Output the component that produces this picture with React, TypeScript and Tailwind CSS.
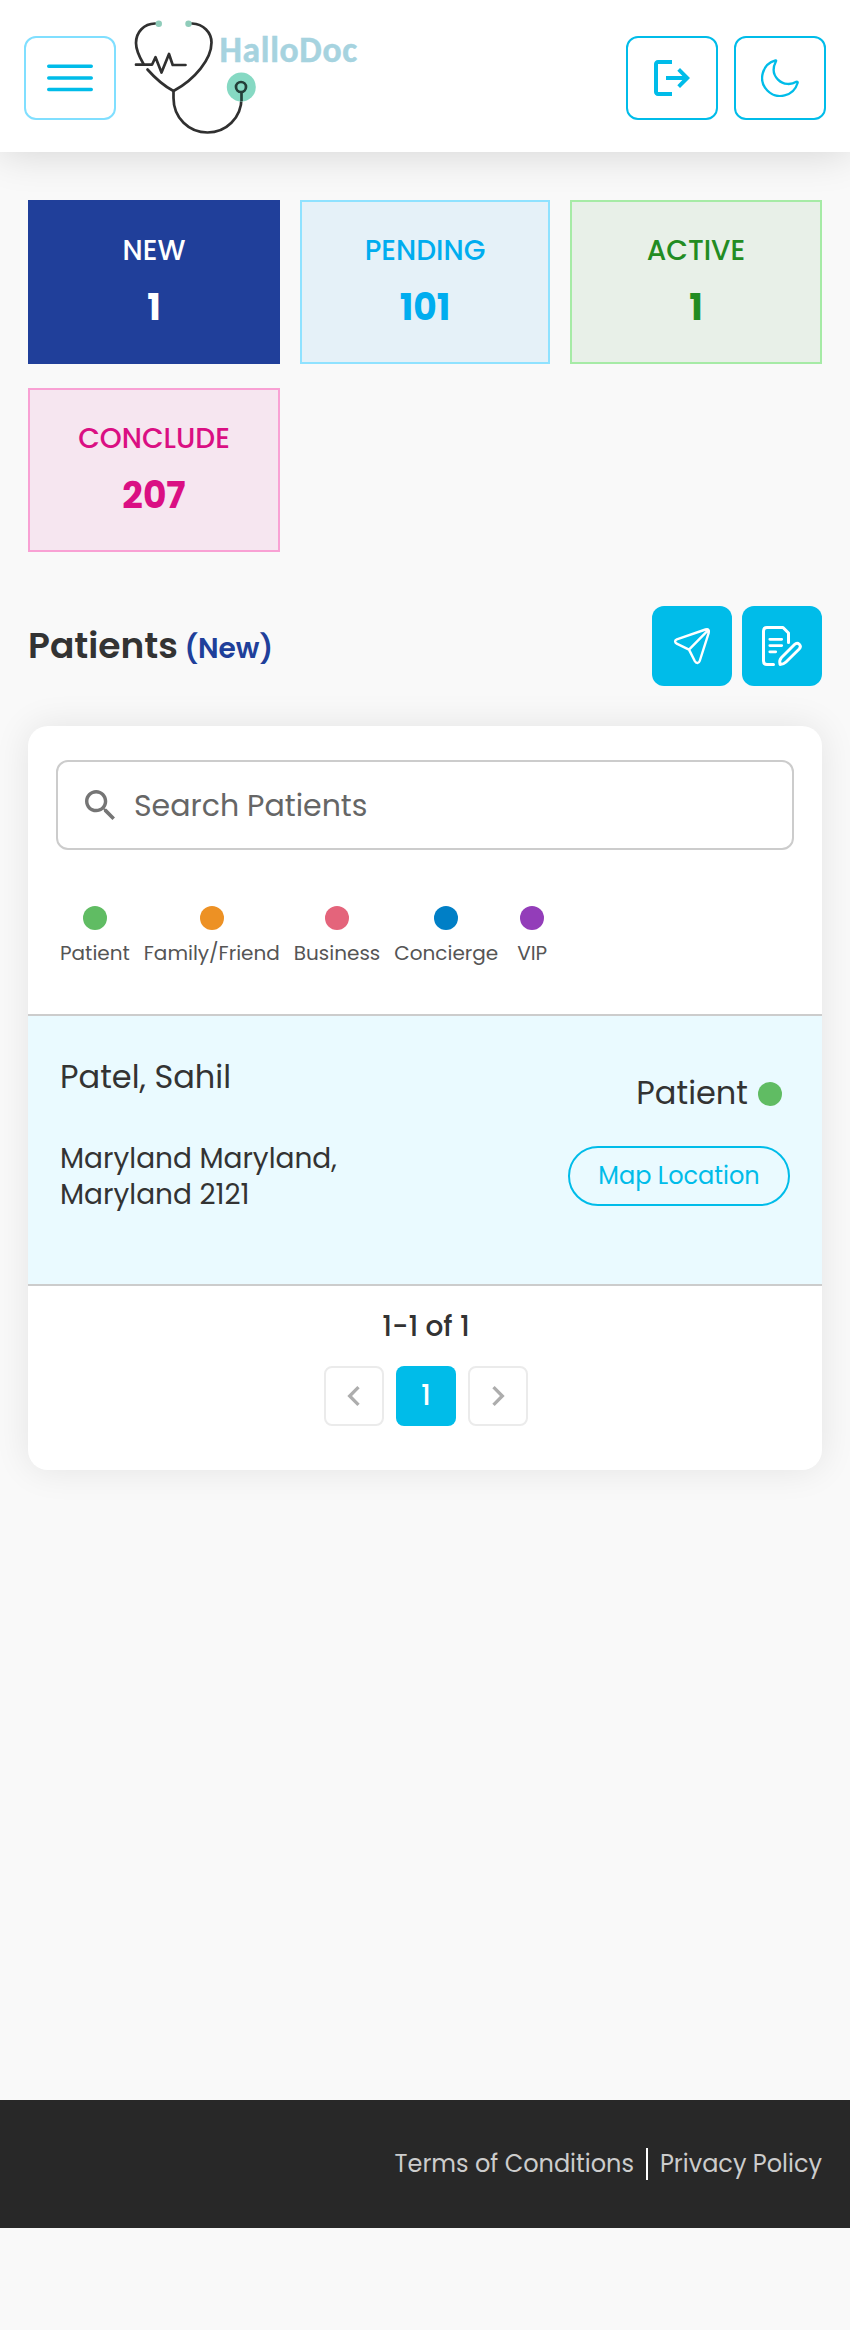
import React from "react";

type Stat = { label: string; count: number; box: string };

const stats: Stat[] = [
  { label: "NEW", count: 1, box: "border-[#203f9a] bg-[#203f9a] text-white" },
  { label: "PENDING", count: 101, box: "border-[#8fe2ff] bg-[#e5f1f8] text-[#00adef]" },
  { label: "ACTIVE", count: 1, box: "border-[#a6eba6] bg-[#e8f0e8] text-[#228c22]" },
  { label: "CONCLUDE", count: 207, box: "border-[#f9a1d4] bg-[#f6e6f0] text-[#da0f83]" },
];

const legend = [
  { label: "Patient", dot: "bg-[#60bc63]" },
  { label: "Family/Friend", dot: "bg-[#ed9124]" },
  { label: "Business", dot: "bg-[#e4647b]" },
  { label: "Concierge", dot: "bg-[#007fc6]" },
  { label: "VIP", dot: "bg-[#933db9]" },
];

function Logo() {
  return (
    <svg width="230" height="120" viewBox="130 16 230 120" fill="none">
      <g stroke="#303030" strokeWidth="2.7" strokeLinecap="round" strokeLinejoin="round">
        <path d="M155 23.500C144 23.700 136 32 136 43C136 51 140 58 143.500 64" />
        <path d="M192 23.500C203.500 24 211.500 32.500 211.500 42.500C211.500 59 195 79.500 173.500 91" />
        <path d="M147.500 69.500C155 78 164 86 173.500 91V98C173.500 118 189 132.500 207.500 132.500C226 132.500 241.500 118 241.500 98" />
        <path d="M136 64.700H152L155.500 57.200L161.500 72.500L169 54L172.700 65H185.500" />
      </g>
      <circle cx="158.800" cy="23.800" r="3.200" fill="#8fccba" />
      <circle cx="188.500" cy="23.800" r="3.200" fill="#8fccba" />
      <circle cx="241.300" cy="87" r="14.500" fill="#86d9c3" />
      <circle cx="241" cy="87" r="5" stroke="#243f39" strokeWidth="2.700" />
      <path d="M241.500 92V101" stroke="#243f39" strokeWidth="2.700" />
      <text x="219.500" y="61.700" fill="#a6d3df" stroke="#a6d3df" strokeWidth="0.5" fontSize="35.500" fontWeight="700" textLength="137.500" lengthAdjust="spacing" fontFamily="Carlito, Lato, sans-serif">
        HalloDoc
      </text>
    </svg>
  );
}

function MenuIcon() {
  return (
    <svg width="46" height="28" viewBox="0 0 46 28" stroke="#00bce9" strokeWidth="3.4" strokeLinecap="round">
      <path d="M1.700 2.300H44.300M1.700 14H44.300M1.700 25.500H44.300" />
    </svg>
  );
}

function LogoutIcon() {
  return (
    <svg width="48" height="48" viewBox="0 0 24 24" fill="#00bce9">
      <path d="M5 5h7V3H5c-1.100 0-2 .9-2 2v14c0 1.100.9 2 2 2h7v-2H5z" />
      <path d="M16 7l-1.350 1.400L17.200 11H9v2h8.200l-2.550 2.600L16 17l5-5z" />
    </svg>
  );
}

function MoonIcon() {
  return (
    <svg width="38" height="38" viewBox="0 0 38 38" fill="none" stroke="#00bce9" strokeWidth="2.3" strokeLinejoin="round">
      <path d="M14.500 1.400A18.100 18.100 0 1 0 36.600 24C37 22.900 36.300 22.400 35.300 22.800C30.500 25.900 22.500 26.200 17 20.600C12 15.500 11.700 8.600 14.900 2.500C15.300 1.600 15.300 1.300 14.500 1.400Z" />
    </svg>
  );
}

function SendIcon() {
  return (
    <svg width="80" height="80" viewBox="0 0 80 80" fill="none" stroke="#fff" strokeWidth="2.4" strokeLinejoin="round" strokeLinecap="round">
      <path d="M24.800 33.400L53.500 23.500C56.200 22.600 57.500 24 56.700 26.800L47.700 55C46.900 57.600 44.200 57.700 42.900 55.300L37 43.600L24.700 37.600C22.500 36.500 22.600 34.200 24.800 33.400ZM37 43.600L56.200 24.200" />
    </svg>
  );
}

function NoteIcon() {
  return (
    <svg width="80" height="80" viewBox="0 0 80 80" fill="none" stroke="#fff" strokeWidth="3" strokeLinecap="round" strokeLinejoin="round">
      <path d="M46.500 36.500V27L41 21.500H25C22.800 21.500 21.500 22.800 21.500 25V55C21.500 57.200 22.800 58.500 25 58.500H31.500" />
      <path d="M27.800 33.300H39.700M27.800 39.600H39.700M27.800 45.800H33.700" strokeWidth="2.8" />
      <path d="M39.500 51.500L52.500 38.500C54 37 56 37 57.300 38.200C58.600 39.500 58.600 41.500 57.200 43L44 56C42.500 57.500 40.500 58.300 38 58.500C37.200 55.500 37.800 53.300 39.500 51.500Z" strokeWidth="2.9" />
    </svg>
  );
}

function SearchIcon() {
  return (
    <svg width="30" height="30" viewBox="3 3 17.500 17.500" fill="#757575">
      <path d="M15.500 14h-.79l-.28-.27C15.410 12.590 16 11.110 16 9.500 16 5.910 13.090 3 9.500 3S3 5.910 3 9.500 5.910 16 9.500 16c1.610 0 3.090-.59 4.230-1.570l.27.28v.79l5 4.990L20.490 19zm-6 0C7.010 14 5 11.990 5 9.500S7.010 5 9.500 5 14 7.010 14 9.500 11.990 14 9.500 14" />
    </svg>
  );
}

function Chevron({ d }: { d: string }) {
  return (
    <svg width="40" height="40" viewBox="0 0 24 24" fill="#adadad">
      <path d={d} />
    </svg>
  );
}

export default function App() {
  return (
    <div className="flex h-[2330px] w-full flex-col bg-[#f9f9f9] font-['Poppins','Inter',sans-serif] text-[#333]">
      <header className="flex h-[152px] shrink-0 items-center bg-white px-6 pt-1 shadow-[0_0_40px_rgba(0,0,0,0.16)]">
        <button className="flex h-[84px] w-[92px] items-center justify-center rounded-xl border-2 border-[#80dfff]">
          <MenuIcon />
        </button>
        <div className="-mt-1 ml-[14px]">
          <Logo />
        </div>
        <div className="ml-auto flex gap-4">
          <button className="flex h-[84px] w-[92px] items-center justify-center rounded-xl border-2 border-[#00bce9]">
            <LogoutIcon />
          </button>
          <button className="flex h-[84px] w-[92px] items-center justify-center rounded-xl border-2 border-[#00bce9]">
            <MoonIcon />
          </button>
        </div>
      </header>

      <main className="flex flex-1 flex-col px-7 pt-12">
        <section className="grid grid-cols-[252px_250px_252px] gap-x-5 gap-y-6">
          {stats.map((s) => (
            <div key={s.label} className={`flex h-[164px] flex-col items-center gap-[9px] border-2 pt-7 ${s.box}`}>
              <span className="text-[28px] font-medium leading-[42px]">{s.label}</span>
              <span className="text-4xl font-bold leading-[54px]">{s.count}</span>
            </div>
          ))}
        </section>

        <div className="mt-[54px] flex h-20 items-center justify-between">
          <h1 className="text-4xl font-semibold">
            Patients <span className="-ml-0.5 text-[28px] text-[#203f9a]">(New)</span>
          </h1>
          <div className="flex gap-2.5">
            <button className="h-20 w-20 rounded-xl bg-[#00bce9]">
              <SendIcon />
            </button>
            <button className="h-20 w-20 rounded-xl bg-[#00bce9]">
              <NoteIcon />
            </button>
          </div>
        </div>

        <section className="mt-10 flex h-[744px] flex-col overflow-hidden rounded-[20px] bg-white shadow-[0_0_36px_rgba(0,0,0,0.09)]">
          <div className="mx-7 mt-[34px] flex h-[90px] shrink-0 items-center rounded-xl border-2 border-[#ccc] px-[27px]">
            <SearchIcon />
            <span className="ml-[19px] text-[30px] text-[#666]">Search Patients</span>
          </div>

          <ul className="mt-14 flex h-[108px] shrink-0 gap-3.5 px-8">
            {legend.map((l) => (
              <li key={l.label} className="flex min-w-10 flex-col items-center">
                <span className={`h-6 w-6 rounded-full ${l.dot}`} />
                <span className="mt-2 text-xl leading-[30px] text-[#555]">{l.label}</span>
              </li>
            ))}
          </ul>

          <div className="flex h-[272px] shrink-0 justify-between border-y-2 border-[#ccc] bg-[#eafaff] px-8">
            <div className="w-[300px] pt-[37px]">
              <p className="text-[32px] leading-[48px]">Patel, Sahil</p>
              <p className="mt-10 text-[28px] leading-9">Maryland Maryland, Maryland 2121</p>
            </div>
            <div className="flex flex-col items-end pt-[53px]">
              <div className="mr-2 flex items-center gap-2.5">
                <span className="text-[32px] leading-[48px]">Patient</span>
                <span className="mt-0.5 h-6 w-6 rounded-full bg-[#60bc63]" />
              </div>
              <button className="mt-[29px] flex h-[60px] w-[222px] items-center justify-center rounded-full border-2 border-[#00bce9] text-2xl text-[#00bce9]">
                Map Location
              </button>
            </div>
          </div>

          <div className="flex flex-col items-center pl-0.5 pt-5">
            <span className="text-[28px] font-medium leading-[42px]">1-1 of 1</span>
            <div className="mt-[18px] flex gap-3">
              <button className="flex h-[60px] w-[60px] items-center justify-center rounded-lg border-2 border-[#ebebeb]">
                <Chevron d="M15.410 7.410 14 6l-6 6 6 6 1.410-1.410L10.830 12z" />
              </button>
              <button className="flex h-[60px] w-[60px] items-center justify-center rounded-lg bg-[#00bce9] text-[28px] font-medium text-white">
                1
              </button>
              <button className="flex h-[60px] w-[60px] items-center justify-center rounded-lg border-2 border-[#ebebeb]">
                <Chevron d="M10 6 8.590 7.410 13.170 12l-4.580 4.590L10 18l6-6z" />
              </button>
            </div>
          </div>
        </section>
      </main>

      <footer className="mb-[102px] flex h-32 shrink-0 items-center justify-end bg-[#282828] px-7 text-2xl text-[#ccc]">
        <a>Terms of Conditions</a>
        <span className="ml-3 mr-3 h-8 w-0.5 bg-white" />
        <a>Privacy Policy</a>
      </footer>
    </div>
  );
}
